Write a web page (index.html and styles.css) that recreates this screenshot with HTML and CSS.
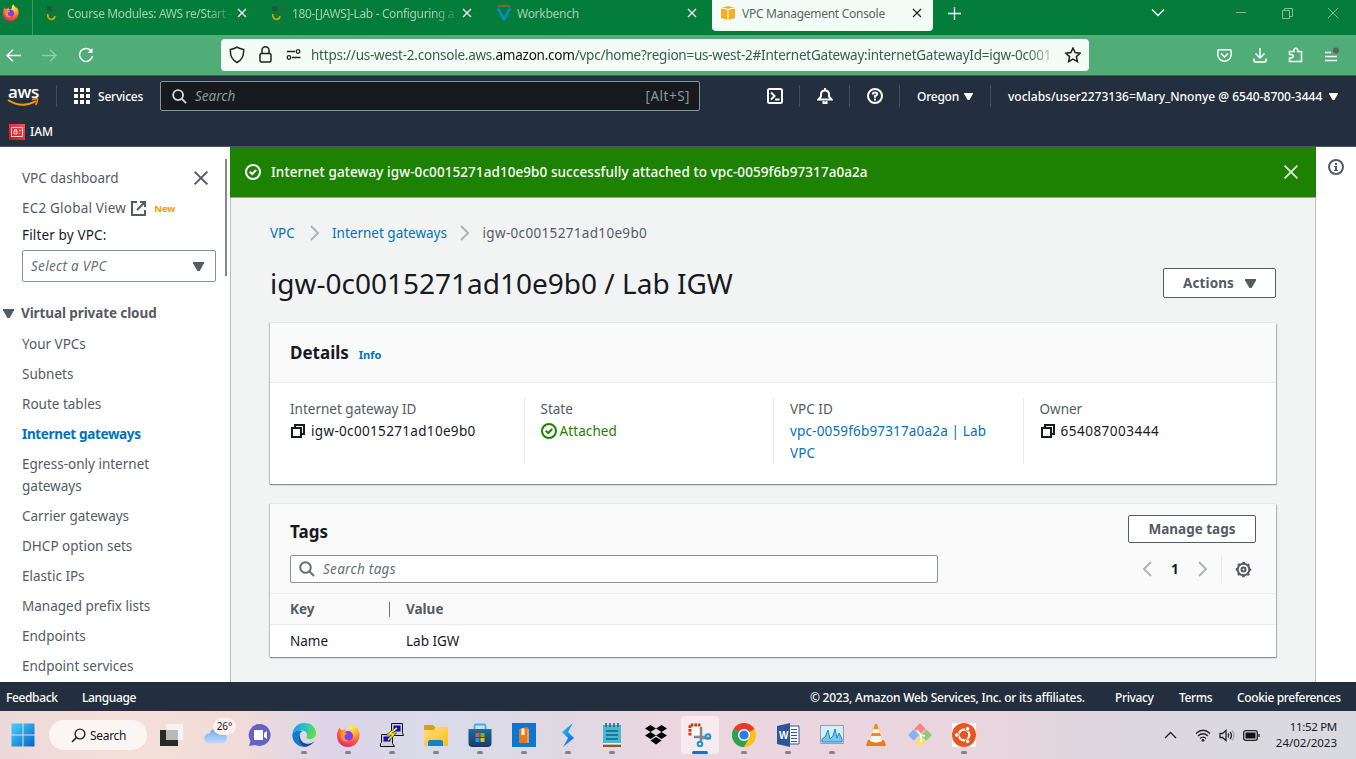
FILE: index.html
```html
<!DOCTYPE html>
<html lang="en">
<head>
<meta charset="utf-8">
<title>VPC Management Console</title>
<link rel="stylesheet" href="styles.css">
</head>
<body>
<svg width="0" height="0" class="defs">
  <defs>
    <linearGradient id="win" x1="0" y1="0" x2="1" y2="1"><stop offset="0" stop-color="#4fd0fb"/><stop offset="1" stop-color="#0067c8"/></linearGradient>
    <radialGradient id="ff" cx=".65" cy=".15" r=".95"><stop offset="0" stop-color="#fff04f"/><stop offset=".35" stop-color="#ffb12c"/><stop offset=".65" stop-color="#ff5a3a"/><stop offset="1" stop-color="#e5128a"/></radialGradient>
    <linearGradient id="edge" x1="0" y1="0" x2="1" y2=".2"><stop offset="0" stop-color="#1a9be0"/><stop offset=".5" stop-color="#27bcd4"/><stop offset="1" stop-color="#5ee04c"/></linearGradient>
    <linearGradient id="cloud" x1="0" y1="0" x2="0" y2="1"><stop offset="0" stop-color="#6ea8ef"/><stop offset="1" stop-color="#c3dafa"/></linearGradient>
    <linearGradient id="fold" x1="0" y1="0" x2="1" y2="1"><stop offset="0" stop-color="#ffe07a"/><stop offset="1" stop-color="#fbbb24"/></linearGradient>
    <linearGradient id="store" x1="0" y1="0" x2="0" y2="1"><stop offset="0" stop-color="#2069a6"/><stop offset="1" stop-color="#163a66"/></linearGradient>
    <linearGradient id="swift" x1="0" y1="0" x2="1" y2="1"><stop offset="0" stop-color="#28c3f5"/><stop offset="1" stop-color="#0a5fd6"/></linearGradient>
    <linearGradient id="iam" x1="1" y1="0" x2="0" y2="1"><stop offset="0" stop-color="#ff5252"/><stop offset="1" stop-color="#c7131f"/></linearGradient>
    <symbol id="firefox" viewBox="0 0 24 24"><path fill="url(#ff)" d="M3.500 4.500L5 7l2.500-.3 2-2-.2 2.500L12 8l2-2.500c-.5-2 .5-4 2.200-5.500.3 2.500 2.300 3.600 3.800 5.500l1-1c2.500 4 3.300 8 1.600 12C20.800 21 16.800 24 12 24 6 24 1 19.500 1 13c0-3.500 1-6 2.500-8.500z"/><circle cx="12" cy="13" r="5" fill="#7a3ff0"/><path fill="#ff9532" d="M5.500 9c2.500-1 4.500.2 6 2-2 .2-3 1-3 3 0 2.500 2.200 3.600 4.500 3-2 2.500-7 1.500-8-2-.5-2-.5-4 .5-6z"/></symbol>
    <symbol id="awslogo" viewBox="0 0 16 16"><path d="M2 1h5v5H2z" fill="#24583a"/><path d="M10 3h6M10 5.500h6" stroke="#24693f" stroke-width="1.500"/><path d="M2.500 8.500q0 5 3.500 5 3 0 3.500-3" fill="none" stroke="#c9a512" stroke-width="1.600"/></symbol>
    <symbol id="x" viewBox="0 0 10 10"><path d="M1 1l8 8M9 1l-8 8" fill="none" stroke="currentColor" stroke-width="1.200"/></symbol>
    <symbol id="mag" viewBox="0 0 16 16"><circle cx="6.500" cy="6.500" r="5.300" fill="none" stroke="currentColor" stroke-width="2"/><path d="M10.300 10.300l4.700 4.700" stroke="currentColor" stroke-width="2"/></symbol>
    <symbol id="copy" viewBox="0 0 14 14"><path d="M1 4h9v9H1z M4 4V1h9v9h-3" fill="none" stroke="currentColor" stroke-width="2"/></symbol>
    <symbol id="ok" viewBox="0 0 16 16"><circle cx="8" cy="8" r="7" fill="none" stroke="currentColor" stroke-width="2"/><path d="M4.700 7.700L7.200 10l4-4" fill="none" stroke="currentColor" stroke-width="2"/></symbol>
    <symbol id="chev" viewBox="0 0 9 16"><path d="M1 1l7 7-7 7" fill="none" stroke="currentColor" stroke-width="2"/></symbol>
    <symbol id="tri" viewBox="0 0 10 8"><path d="M0 0h10v1L6 8H4L0 1z" fill="currentColor"/></symbol>
  </defs>
</svg>

<header class="tabs">
  <div class="pin"><svg width="17" height="17"><use href="#firefox"/></svg></div>
  <div class="tab"><svg width="17" height="17"><use href="#awslogo"/></svg><span class="tab-t t1">Course Modules: AWS re/Start -</span><svg class="close" width="10" height="10"><use href="#x"/></svg></div>
  <div class="tab"><svg width="17" height="17"><use href="#awslogo"/></svg><span class="tab-t t2">180-[JAWS]-Lab - Configuring a</span><svg class="close" width="10" height="10"><use href="#x"/></svg></div>
  <div class="tab"><svg class="wb" width="14" height="16" viewBox="0 0 14 16"><path d="M1 2q6-2.500 12 0" fill="none" stroke="#b55a25" stroke-width="1.500"/><path d="M1 3.500l6 11 6-11" fill="none" stroke="#078dbb" stroke-width="2.800"/></svg><span class="tab-t t3">Workbench</span><svg class="close" width="10" height="10"><use href="#x"/></svg></div>
  <div class="tab active"><svg width="16" height="16" viewBox="0 0 16 16"><path d="M1 3.500l6.500 1.300V15L1 13zM15 3.500L8.500 4.800V15l6.500-2zM2 2.500L8 1l6 1.500-6 1.200z" fill="#f3ae25"/></svg><span class="tab-t t4">VPC Management Console</span><svg class="close" width="10" height="10"><use href="#x"/></svg></div>
  <svg class="plus" width="13" height="13" viewBox="0 0 13 13"><path d="M6.500 0v13M0 6.500h13" stroke="#fff" stroke-width="1.300"/></svg>
  <div class="winctl">
    <svg width="14" height="9" viewBox="0 0 14 9"><path d="M1 1.500l6 6 6-6" fill="none" stroke="#fff" stroke-width="1.300"/></svg>
    <svg class="dim m1" width="10" height="10"><path d="M0 4.500h10"/></svg>
    <svg class="dim m2" width="11" height="11"><path d="M.5 2.500h7v8h-7zM2.500 2.500v-2h8v8h-3"/></svg>
    <svg class="dim m3" width="10" height="10"><path d="M0 0l10 10M10 0L0 10"/></svg>
  </div>
</header>

<div class="toolbar">
  <svg class="nav" width="15" height="13" viewBox="0 0 15 13"><path d="M15 6.500H1M7 .7l-6 5.800 6 5.800"/></svg>
  <svg class="nav faded" width="15" height="13" viewBox="0 0 15 13"><path d="M0 6.500h14M8 .7l6 5.800-6 5.800"/></svg>
  <svg class="nav" width="16" height="16" viewBox="0 0 16 16"><path d="M13.600 4.500A6.500 6.500 0 1 0 14.500 9"/><path d="M14.500 1v5h-5z" fill="#fff" stroke="none"/></svg>
  <div class="url">
    <svg width="16" height="18" viewBox="0 0 16 18"><path d="M8 1.200c2 1.500 4.300 2 6.600 2.300C15 9 13 14 8 16.500 3 14 1 9 1.400 3.500 3.700 3.200 6 2.700 8 1.200z"/></svg>
    <svg class="lock" width="13" height="17" viewBox="0 0 13 17"><rect x="1" y="7.500" width="11" height="8.500" rx="1.500"/><path d="M3 7.500V4.300a3.500 3.500 0 0 1 7 0v3.200"/></svg>
    <svg class="perm" width="15" height="11" viewBox="0 0 15 11"><path d="M1 2.500h8M6 8.500h8.500"/><circle cx="12" cy="2.500" r="1.800"/><circle cx="3" cy="8.500" r="1.800"/></svg>
    <span class="addr">https://us-west-2.console.aws.<b>amazon.com</b>/vpc/home?region=us-west-2#InternetGateway:internetGatewayId=igw-0c001</span>
    <svg class="star" width="16" height="16" viewBox="0 0 16 16"><path d="M8 1l2.100 4.600 5 .6-3.700 3.400 1 5L8 12.100 3.600 14.600l1-5L.9 6.200l5-.6z"/></svg>
  </div>
  <div class="ext">
    <svg width="15" height="13" viewBox="0 0 15 13"><path d="M2 .8h11q1.200 0 1.200 1.200v3.500a6.700 6.700 0 0 1-13.400 0V2Q.8.800 2 .8zM4 4.500L7.500 8 11 4.500"/></svg>
    <svg width="14" height="16" viewBox="0 0 14 16"><path d="M7 1v10M2.500 6.500L7 11l4.500-4.500M1 11.500v2q0 1.500 1.500 1.500h9q1.500 0 1.500-1.500v-2"/></svg>
    <svg width="15" height="16" viewBox="0 0 15 16"><path d="M1.500 14.500v-3.500h2a1.700 1.700 0 0 0 0-3.400h-2V4.500H6V3a1.800 1.800 0 0 1 3.600 0v1.500H13.500v10z"/></svg>
    <svg width="15" height="17" viewBox="0 0 15 17"><path d="M1 5.500h6M1 9.500h12M1 13.500h12"/><circle cx="12" cy="3.500" r="3" fill="#5d6062" stroke="none"/></svg>
  </div>
</div>

<div class="aws">
  <div class="aws-main">
    <div class="logo"><span>aws</span><svg width="32" height="9" viewBox="0 0 32 9"><path d="M1 2q14 9 28 1" fill="none" stroke="#f90" stroke-width="2"/><path d="M25 1.500q6-1.500 5.500 0 0 3-2 5.500" fill="none" stroke="#f90" stroke-width="1.400"/></svg></div>
    <i class="sep s1"></i>
    <svg class="grid" width="16" height="16" fill="#fff"><path d="M0 0h4v4H0zM6 0h4v4H6zM12 0h4v4h-4zM0 6h4v4H0zM6 6h4v4H6zM12 6h4v4h-4zM0 12h4v4H0zM6 12h4v4H6zM12 12h4v4h-4z"/></svg>
    <span class="services">Services</span>
    <div class="find"><svg width="15" height="15"><use href="#mag"/></svg><em>Search</em><span>[Alt+S]</span></div>
    <div class="tools">
      <svg width="16" height="16" viewBox="0 0 16 16"><rect x="1" y="1" width="14" height="14" rx="1.500"/><path d="M4 4.500L7.500 8 4 11.500M8 11.500h4.500"/></svg>
      <i class="sep"></i>
      <svg width="16" height="16" viewBox="0 0 16 16"><path d="M1.500 11.500L4 8.500V6.500q0-4 4-4t4 4v2l2.500 3zM8 0v2.500M6.500 13v2h3v-2"/></svg>
      <i class="sep"></i>
      <svg width="16" height="16" viewBox="0 0 16 16"><circle cx="8" cy="8" r="7"/><path d="M5.800 6.500Q5.800 4.500 8 4.500t2.200 1.800Q10.200 7.500 8 8v1.800M8 10.800v1.700"/></svg>
      <i class="sep"></i>
      <span class="region">Oregon</span><svg class="ar" width="9" height="7"><use href="#tri"/></svg>
      <i class="sep s2"></i>
      <span class="user">voclabs/user2273136=Mary_Nnonye @ 6540-8700-3444</span><svg class="ar" width="9" height="7"><use href="#tri"/></svg>
    </div>
  </div>
  <div class="fav"><svg width="16" height="16" viewBox="0 0 16 16"><path fill="url(#iam)" d="M0 0h16v16H0z"/><path d="M2.500 3.500h11v9h-11zM5 7h3v3H5zM5.500 7V5.500h2V7M10 6.500h2M10 9.500h1" fill="none" stroke="#fff" stroke-width=".8"/></svg><span>IAM</span></div>
</div>

<div class="body">
  <nav class="side">
    <div class="side-top"><span class="sd1">VPC dashboard</span><svg width="16" height="16"><use href="#x"/></svg></div>
    <div class="ec2"><span class="sd2">EC2 Global View</span><svg width="15" height="15" viewBox="0 0 15 15"><path d="M6 1H1v13h13V9M9 1h5v5M14 1L6 9" fill="none" stroke="#545b64" stroke-width="2"/></svg><b>New</b></div>
    <div class="filter">Filter by VPC:</div>
    <div class="select"><em>Select a VPC</em><svg width="11" height="9"><use href="#tri"/></svg></div>
    <div class="group"><svg width="11" height="9"><use href="#tri"/></svg><b>Virtual private cloud</b></div>
    <ul>
      <li>Your VPCs</li><li>Subnets</li><li>Route tables</li><li class="cur">Internet gateways</li><li>Egress-only internet<br>gateways</li><li>Carrier gateways</li><li>DHCP option sets</li><li>Elastic IPs</li><li>Managed prefix lists</li><li>Endpoints</li><li>Endpoint services</li>
    </ul>
    <i class="scroll"></i>
  </nav>
  <main>
    <div class="flash"><svg width="16" height="16"><use href="#ok"/></svg><span>Internet gateway igw-0c0015271ad10e9b0 successfully attached to vpc-0059f6b97317a0a2a</span><svg class="fx" width="16" height="16"><use href="#x"/></svg></div>
    <div class="page">
      <div class="crumbs"><a>VPC</a><svg width="9" height="16"><use href="#chev"/></svg><a class="c2">Internet gateways</a><svg width="9" height="16"><use href="#chev"/></svg><span class="c3">igw-0c0015271ad10e9b0</span></div>
      <div class="title"><h1>igw-0c0015271ad10e9b0 / Lab IGW</h1><button class="btn actions"><span>Actions</span><svg width="11" height="9"><use href="#tri"/></svg></button></div>
      <section class="card details">
        <div class="card-h"><h2>Details</h2><b class="info">Info</b></div>
        <div class="cols">
          <div><label>Internet gateway ID</label><p><svg width="14" height="14"><use href="#copy"/></svg><span class="v1">igw-0c0015271ad10e9b0</span></p></div>
          <div><label>State</label><p class="green"><svg width="16" height="16"><use href="#ok"/></svg><span class="v2">Attached</span></p></div>
          <div><label>VPC ID</label><p class="link v3">vpc-0059f6b97317a0a2a | Lab<br>VPC</p></div>
          <div><label>Owner</label><p><svg width="14" height="14"><use href="#copy"/></svg><span class="v4">654087003444</span></p></div>
        </div>
      </section>
      <section class="card tags">
        <div class="tag-top">
          <div class="tag-title"><h2>Tags</h2><button class="btn manage">Manage tags</button></div>
          <div class="tag-search">
            <div class="input"><svg width="16" height="16"><use href="#mag"/></svg><em>Search tags</em></div>
            <div class="pager"><svg class="flip" width="9" height="16"><use href="#chev"/></svg><span>1</span><svg width="9" height="16"><use href="#chev"/></svg><i></i>
            <svg class="gear" width="17" height="17" viewBox="0 0 17 17"><circle cx="8.500" cy="8.500" r="5.800"/><circle cx="8.500" cy="8.500" r="2"/><circle cx="8.500" cy="8.500" r="7" stroke-dasharray="2.600 2.898" stroke-dashoffset="1.300" stroke-width="1.600"/></svg></div>
          </div>
        </div>
        <div class="row head"><b>Key</b><i></i><b>Value</b></div>
        <div class="row"><span class="n">Name</span><span>Lab IGW</span></div>
      </section>
    </div>
  </main>
  <aside><svg width="16" height="16" viewBox="0 0 16 16"><circle cx="8" cy="8" r="7" fill="none" stroke="#545b64" stroke-width="2"/><path d="M7 4h2v2H7zM6 7h3v4h1v1H6v-1h1V8H6z" fill="#545b64"/></svg></aside>
</div>

<footer><span class="f1">Feedback</span><span class="f2">Language</span><span class="f3">© 2023, Amazon Web Services, Inc. or its affiliates.</span><span class="f4">Privacy</span><span class="f5">Terms</span><span class="f6">Cookie preferences</span></footer>

<div class="taskbar">
  <div class="app"><svg width="24" height="24" viewBox="0 0 24 24"><path fill="url(#win)" d="M.5.500h11v11H.5zM12.500.500h11v11h-11zM.5 12.500h11v11H.5zM12.500 12.500h11v11h-11z"/></svg></div>
  <div class="pill"><svg width="15" height="15" viewBox="0 0 15 15"><circle cx="9" cy="6" r="4.900" fill="none" stroke="#222" stroke-width="1.400"/><path d="M5.500 9.500L1 14" stroke="#222" stroke-width="1.600"/></svg><span>Search</span></div>
  <div class="app"><svg width="24" height="24" viewBox="0 0 24 24"><path d="M6 1h17v16H6z" fill="#f4f4f4"/><path d="M0 7h18v16H0z" fill="#292929"/><path d="M6 7h12v10H6z" fill="#b9b9b9"/></svg></div>
  <div class="app weather"><svg width="26" height="26" viewBox="0 0 26 26"><path fill="url(#cloud)" d="M6 21.500a5 5 0 0 1 .5-10A7 7 0 0 1 19 10a6 6 0 0 1 1 11.500z"/></svg><span>26°</span></div>
  <div class="app"><svg width="24" height="24" viewBox="0 0 24 24"><path fill="#6661c8" d="M12 1a11 11 0 1 1-5 21l-6 1 1.500-5A11 11 0 0 1 12 1z"/><path fill="#fff" d="M6 7h9v10H6zM16 10l3-2v8l-3-2z"/></svg></div>
  <div class="app run"><svg width="24" height="24" viewBox="0 0 24 24"><path fill="url(#edge)" d="M.5 11C1 4.500 6 0 12.500 0 20 0 24 5 24 10c0 4-3 6-6.500 6-2 0-3.500-.8-3-2 1.500-2.500 0-6-4-6.500C6 7 2 8 .5 11z"/><path fill="#117bd3" d="M.4 11C2 7.500 7 6.500 10.500 8.500 7.500 9.500 6.500 13 8 16.500c1.500 4 5 6 8 6.500-8 3-16.500-3-15.600-12z"/><path fill="#0f4f9b" d="M10 9c-4 3-2 10 3.500 11.500 4 1 7-.5 9-2.500-2 3.500-5.500 5.500-10 5.800C7 22 4.500 13 10 9z"/></svg></div>
  <div class="app run"><svg width="24" height="24"><use href="#firefox"/></svg></div>
  <div class="app run"><svg width="24" height="24" viewBox="0 0 24 24"><g fill="#cfcfcf" stroke="#111"><path d="M11.500.500h11v9l1 3h-12zM1.500 11.500h11v9l2 3H.5v-3l1-1z"/></g><path d="M13.500 2.500h7v6h-7zM3.500 13.500h7v5h-7z" fill="#0808d8"/><path d="M17 5l-8 6h5l-6 6" fill="none" stroke="#222" stroke-width="2.600"/><path d="M17 5l-8 6h5l-6 6" fill="none" stroke="#f7ee18" stroke-width="1.600"/></svg></div>
  <div class="app run"><svg width="26" height="24" viewBox="0 0 26 24"><path d="M1 3q0-1 1-1h8l3 3v5H1z" fill="#dca00e"/><path d="M1 7h10l2-3h12v19H1z" fill="url(#fold)"/><path d="M5 23v-4q0-2 2-2h11q2 0 2 2v4z" fill="#1580ce"/></svg></div>
  <div class="app run"><svg width="24" height="24" viewBox="0 0 24 24"><path d="M6.500 6V3q0-1.500 1.500-1.500h8q1.500 0 1.500 1.500v3" fill="none" stroke="#29b5ef" stroke-width="1.800"/><path d="M.5 6h23v14q0 4-4 4h-15q-4 0-4-4z" fill="url(#store)"/><path d="M7.500 10h4v4h-4z" fill="#f25022"/><path d="M12.500 10h4v4h-4z" fill="#7fba00"/><path d="M7.500 15h4v4h-4z" fill="#00a4ef"/><path d="M12.500 15h4v4h-4z" fill="#ffb900"/></svg></div>
  <div class="app run"><svg width="24" height="24" viewBox="0 0 24 24"><path fill="#0878d4" d="M0 0h24v24H0z"/><path d="M7 6l8-2 2 2v14H7z" fill="#e8781a"/><path d="M9.500 5.500h3v7l-1.500-1-1.500 1z" fill="#fff"/><path d="M15 6h2v14h-2z" fill="#f79a4a"/></svg></div>
  <div class="app run"><svg width="24" height="24" viewBox="0 0 24 24"><path fill="url(#swift)" d="M17 0L6 9l6 6-5 9 11-9-6-6z"/></svg></div>
  <div class="app run"><svg width="20" height="24" viewBox="0 0 20 24"><path d="M1 2h18v20H1z" fill="#49b8d3"/><path d="M1 21.500h18V24H1z" fill="#a84e12"/><path d="M1 20h18v1.500H1z" fill="#fff"/><path d="M4 0v4M8 0v4M12 0v4M16 0v4M4 8h12M4 12h12M4 16h12" stroke="#14627d" stroke-width="1.500"/></svg></div>
  <div class="app"><svg width="24" height="22" viewBox="0 0 24 22"><path d="M6.500 1L12 4.500 6.500 8 1 4.500zM17.500 1L23 4.500 17.500 8 12 4.500zM6.500 8L12 11.500 6.500 15 1 11.500zM17.500 8L23 11.500 17.500 15 12 11.500zM12 13l5.500 3.500L12 20.500 6.500 16.500z"/></svg></div>
  <div class="app run on"><svg width="24" height="24" viewBox="0 0 24 24"><path d="M3 3h9v9H3z" fill="#fff"/><path d="M2 12.500V2h10.500" fill="none" stroke="#d4380d" stroke-width="3" stroke-dasharray="2.800 .9"/><path d="M13 4v11h10M6 14h12M13 12v6" fill="none" stroke="#7d8892" stroke-width="2.500"/><g fill="none" stroke="#1693dc" stroke-width="2"><circle cx="20" cy="13.500" r="2.300"/><circle cx="12" cy="21" r="2.300"/></g></svg></div>
  <div class="app run"><svg width="24" height="24" viewBox="0 0 24 24"><circle cx="12" cy="12" r="12" fill="#fbc116"/><path d="M12 12L1.600 6a12 12 0 0 1 20.800 0z" fill="#e33b2e"/><path d="M12 12L1.600 6A12 12 0 0 0 12 24l5-9z" fill="#2ba24c"/><circle cx="12" cy="12" r="6" fill="#fff"/><circle cx="12" cy="12" r="4.600" fill="#2e7bea"/></svg></div>
  <div class="app run"><svg width="24" height="24" viewBox="0 0 24 24"><path d="M12 3h11v18H12z" fill="#fff" stroke="#2b579a"/><path d="M15 6.500h6M15 9.500h6M15 12.500h6M15 15.500h6M15 18.500h6" stroke="#2b579a"/><path d="M1 3l13-3v24L1 21z" fill="#2b579a"/><text x="3" y="16" class="wd">W</text></svg></div>
  <div class="app run"><svg width="24" height="20" viewBox="0 0 24 20"><path d="M.5.500h23v18H.5z" fill="#d5edf8" stroke="#8fa2ad"/><path d="M2 14l3-2 3-7 2 9 3-3 2-7 2 9 2-5 3 6v3H2z" fill="#77c4ec" stroke="#2389c7"/></svg></div>
  <div class="app"><svg width="24" height="24" viewBox="0 0 24 24"><path d="M11 1h2l6 18H5z" fill="#f58a16"/><path d="M9.300 6h5.400l1.300 4H8zM7 13h10l1 4H6z" fill="#f5f5f5"/><path d="M4 17h16l2 6H2z" fill="#f37a0c"/><path d="M6 18q6 3 12 0v-1H6z" fill="#fff"/></svg></div>
  <div class="app"><svg width="24" height="24" viewBox="0 0 24 24"><g transform="rotate(45 12 12)"><path fill="#f88482" d="M3.500 3.500h8v8h-8z"/><path fill="#91cb76" d="M12.500 3.500h8v8h-8z"/><path fill="#86b2f7" d="M3.500 12.500h8v8h-8z"/><path fill="#fddf71" d="M12.500 12.500h8v8h-8z"/></g><path d="M9 7l4 5v7M13 12l4 1" stroke="#fff" stroke-width="1.500" fill="none"/></svg></div>
  <div class="app run"><svg width="24" height="24" viewBox="0 0 24 24"><path fill="#fff" d="M0 0h24v24H0z"/><circle cx="12" cy="12" r="12" fill="#e95420"/><circle cx="12" cy="12" r="5.300" fill="none" stroke="#fff" stroke-width="2.200"/><g fill="#fff" stroke="#e95420"><circle cx="4.800" cy="12" r="2.300"/><circle cx="15.600" cy="5.800" r="2.300"/><circle cx="15.600" cy="18.200" r="2.300"/></g></svg></div>
  <div class="tray">
    <svg class="up" width="13" height="8"><path d="M1 7l5.500-5.500L12 7"/></svg>
    <svg class="wifi" width="16" height="13" viewBox="0 0 16 13"><path d="M1 4.500q7-6.500 14 0M3 7q5-4.500 10 0M5 9.500q3-2.800 6 0"/><circle cx="8" cy="11.300" r="1.400" fill="#222" stroke="none"/></svg>
    <svg class="vol" width="16" height="13" viewBox="0 0 16 13"><path d="M1 4.500h2.500L7 1.500v10l-3.500-3H1zM9 4.500q1.500 2 0 4M11 3q3 3.500 0 7"/><path d="M13 1.500q4 5 0 10" stroke="#aaa"/></svg>
    <svg class="bat" width="17" height="11" viewBox="0 0 17 11"><rect x=".7" y=".7" width="13.600" height="9.600" rx="2"/><path d="M2.500 2.500h10v6h-10z" fill="#111" stroke="none"/><path d="M16 4v3"/></svg>
    <div class="clock"><span class="k1">11:52 PM</span><span class="k2">24/02/2023</span></div>
  </div>
</div>
</body>
</html>
```
FILE: styles.css
```css
* { box-sizing: border-box; }
body { margin: 0; width: 1356px; height: 759px; overflow: hidden; font: 13.500px/22px "Noto Sans", sans-serif; color: #16191f; background: #fff; }
svg { display: block; flex: none; }
.defs { position: absolute; }
span, em, a, b, h1, h2 { white-space: nowrap; }

/* browser tabs */
.tabs { height: 35px; background: #047c3a; display: flex; color: #fff; font-size: 12px; line-height: 16px; }
.pin { width: 33px; padding: 4px 0 0 2px; border-right: 1px solid #3d9b66; }
.tab { width: 225px; height: 31px; display: flex; align-items: flex-start; padding: 5px 0 0 12px; }
.tab .tab-t { margin: 1px 0 0 5px; width: 165px; color: #a3cfb4; letter-spacing: -.28px; }
.tab .t1, .tab .t2 { -webkit-mask-image: linear-gradient(90deg, #000 140px, transparent 168px); mask-image: linear-gradient(90deg, #000 140px, transparent 168px); letter-spacing: -.36px; }
.tab .close { margin: 3px 0 0 5px; }
.tab .wb { margin: 0 1px 0 2px; }
.tab .t3 { margin-left: 5px; }
.tab.active { background: #f3fcf7; color: #222; width: 221px; margin-left: 4px; padding-left: 8px; border-radius: 0 0 4px 4px; }
.tab.active .tab-t { color: #56675d; margin-left: 6px; }
.plus { margin: 7px 0 0 15px; }
.winctl { display: flex; margin: 8px 0 0 190px; align-items: flex-start; }
.dim { fill: none; stroke: #83bd9b; stroke-width: 1; }
.m1 { margin-left: 71px; } .m2 { margin-left: 36px; } .m3 { margin-left: 35px; }

/* address bar */
.toolbar { height: 41px; background: #50ad78; border-bottom: 1px solid #0d7c40; display: flex; align-items: center; padding-left: 6px; }
.nav { fill: none; stroke: #fff; stroke-width: 1.500; margin-right: 21px; }
.nav.faded { stroke: #8fcca9; }
.url { margin: 0 0 1px 106px; width: 868px; height: 32px; border-radius: 4px; background: #f3fcf7; display: flex; align-items: center; padding-left: 8px; }
.url svg { fill: none; stroke: #222; stroke-width: 1.500; }
.url .lock { margin-left: 14px; } .url .perm { margin: 0 10px 0 14px; stroke-width: 1.300; }
.addr { width: 749px; padding-top: 1px; letter-spacing: -.235px; color: #3b5f4a; -webkit-mask-image: linear-gradient(90deg, #000 715px, transparent 752px); mask-image: linear-gradient(90deg, #000 715px, transparent 752px); }
.addr b { font-weight: 400; color: #111; }
.star { margin-left: 5px; }
.ext { display: flex; align-items: center; margin-left: 128px; gap: 21px; }
.ext svg { fill: none; stroke: #fff; stroke-width: 1.500; }

/* console header */
.aws { height: 71px; background: #232f3e; color: #fff; border-bottom: 1px solid #4d5560; }
.aws-main { height: 40px; display: flex; align-items: center; font-size: 12px; font-weight: 500; }
.logo { width: 56px; padding-left: 7px; }
.logo span { display: block; font: 600 17px/13px "Open Sans", sans-serif; letter-spacing: -.3px; padding-left: 1px; }
.sep { width: 1px; height: 22px; background: #414d5c; }
.grid { margin: 0 8px 0 17px; }
.services { width: 62px; letter-spacing: -.2px; padding-top: 2px; }
.find { width: 540px; height: 30px; border: 1px solid #879596; background: #16191f; border-radius: 2px; display: flex; align-items: center; padding: 0 9px 0 11px; font-size: 13.500px; font-weight: 400; color: #d5dbdb; }
.find em { margin-left: 8px; flex: 1; color: #8d999a; }
.find span { color: #8d999a; letter-spacing: .5px; }
.tools { display: flex; align-items: center; margin-left: 67px; }
.tools svg { fill: none; stroke: #fff; stroke-width: 2; margin-right: 16px; }
.tools .sep + svg { margin-left: 17px; }
.tools .ar { stroke: none; margin: 0; }
.tools span { padding-top: 2px; }
.region { margin-left: 17px; width: 47px; letter-spacing: -.25px; }
.tools .s2 { margin-left: 17px; }
.user { margin-left: 17px; width: 321px; }
.fav { display: flex; align-items: center; gap: 5px; padding-left: 9px; height: 31px; font-size: 12px; font-weight: 500; }

/* columns */
.body { display: flex; height: 535px; }
.side { width: 230px; position: relative; color: #545b64; padding: 20px 0 0 22px; overflow: hidden; }
.side-top { display: flex; align-items: center; height: 22px; }
.side-top svg { margin-left: auto; margin-right: 21px; }
.ec2 { display: flex; align-items: center; margin-top: 8px; height: 22px; }
.sd2 { letter-spacing: .2px; }
.ec2 svg { margin: 0 8px 0 5px; }
.ec2 b { font-size: 9.500px; color: #ff9900; padding-top: 2px; }
.filter { color: #16191f; margin-top: 5px; letter-spacing: .15px; }
.select { margin-top: 4px; width: 194px; height: 32px; border: 1px solid #879596; border-radius: 2px; display: flex; align-items: center; justify-content: space-between; padding: 0 11px 0 8px; }
.select em { color: #687078; letter-spacing: .3px; }
.group { margin: 20px 0 0 -19px; display: flex; align-items: center; gap: 7px; letter-spacing: -.1px; }
.side ul { list-style: none; margin: 9px 0 0; padding: 0; }
.side li { margin-bottom: 8px; }
.side .cur { font-weight: 700; color: #0073bb; letter-spacing: -.35px; }
.scroll { position: absolute; right: 3px; top: 12px; width: 2px; height: 117px; background: #85898e; }
main { width: 1086px; background: #f2f3f3; box-shadow: inset 1px 0 #b9c0c4, inset -1px 0 #b9c0c4; }
.flash { height: 51px; background: #1d8102; color: #fff; border-bottom: 1px solid #9ba79b; display: flex; align-items: center; padding: 0 17px 0 15px; font-weight: 500; }
.flash span { margin-left: 10px; letter-spacing: .075px; }
.fx { margin-left: auto; color: #d8e9d4; }
.page { padding: 24px 40px 0; }
.crumbs { display: flex; align-items: center; height: 22px; color: #545b64; }
.crumbs a, .link, .info { color: #0073bb; }
.crumbs a:first-child { width: 26px; }
.crumbs .c2 { width: 114.500px; }
.crumbs svg { color: #aab7b8; margin: 0 13.500px; }
.crumbs .c3, .v1 { letter-spacing: .33px; }
.title { display: flex; justify-content: space-between; align-items: center; height: 36px; margin: 21px 0 22px; }
h1 { font-size: 28px; line-height: 36px; font-weight: 400; margin: 0; }
h2 { font-size: 17px; line-height: 22px; margin: 0; font-weight: 700; }
.btn { border: 1px solid #545b64; border-radius: 2px; background: #fff; color: #545b64; font: 700 13.500px/22px "Noto Sans", sans-serif; padding: 0; display: flex; justify-content: center; align-items: center; }
.actions { width: 113px; height: 30px; gap: 11px; letter-spacing: .1px; }
.card { background: #fff; box-shadow: 0 1px 1px #8b989b, 1px 1px 1px #b6bebf, -1px 0 1px #c8cecf, 0 -1px 0 #eaeded; }
.details { height: 161px; }
.card-h { height: 60px; background: #fafafa; border-bottom: 1px solid #eaeded; display: flex; align-items: center; padding-left: 20px; }
.info { font-size: 11px; margin: 4px 0 0 10px; }
.cols { display: grid; grid-template-columns: 253.500px 249.500px 249.500px 1fr; padding-top: 15px; }
.cols > div { height: 66px; padding-left: 16px; border-left: 1px solid #eaeded; }
.cols > div:first-child { padding-left: 20px; border: 0; }
.cols label { color: #545b64; display: block; }
.cols p { margin: 0; display: flex; }
.cols p svg { margin: 4px 6px 0 1px; }
.cols p.green { color: #1d8102; }
.cols p.green svg { margin: 3px 3px 0 0; }
.cols p.link { display: block; letter-spacing: .17px; }
.v2 { letter-spacing: .1px; }
.v4 { letter-spacing: .5px; }
.tags { margin-top: 20px; height: 153px; }
.tag-top { background: #fafafa; height: 90px; padding: 11px 20px 0; border-bottom: 1px solid #eaeded; }
.tag-title { display: flex; justify-content: space-between; height: 28px; }
.tag-title h2 { padding-top: 6px; }
.manage { width: 128px; height: 28px; }
.tag-search { display: flex; margin-top: 12px; }
.input { width: 648px; height: 28px; border: 1px solid #879596; border-radius: 2px; background: #fff; display: flex; align-items: center; padding-left: 8px; gap: 8px; color: #687078; letter-spacing: .3px; }
.pager { display: flex; align-items: center; color: #aab7b8; margin-left: 205px; }
.pager span { color: #16191f; font-weight: 700; width: 8px; margin: 0 19px; }
.pager i { width: 1px; height: 28px; background: #eaeded; margin: 0 13px 0 14px; }
.flip { transform: scaleX(-1); }
.gear { fill: none; stroke: #545b64; stroke-width: 2; }
.row { display: flex; align-items: center; padding-left: 20px; height: 32px; }
.head { background: #fafafa; border-bottom: 1px solid #eaeded; color: #545b64; height: 31px; }
.head b:first-child { width: 99px; }
.head i { width: 1px; height: 15px; background: #687078; margin-right: 16px; }
.row .n { width: 116px; }
aside { width: 40px; padding: 12px 0 0 12px; }

/* footer */
footer { height: 29px; background: #232f3e; color: #fff; display: flex; align-items: center; font-size: 12px; font-weight: 500; padding: 2px 0 0 6px; letter-spacing: -.37px; }
.f1 { width: 76px; } .f2 { width: 728px; } .f3 { width: 305px; letter-spacing: -.24px; } .f4 { width: 64px; } .f5 { width: 58px; }

/* taskbar */
.taskbar { height: 48px; display: flex; align-items: center; padding-left: 1px; background: linear-gradient(90deg, #ecd9d9 0, #f5dfd8 130px, #f1dbd8 240px, #dcd5e8 330px, #d9dbe8 450px, #dfd8e3 570px, #ecd6df 680px, #e8d5de 1000px, #dcd7df 1120px, #d9dae0 1356px); }
.app { width: 44px; height: 48px; display: flex; align-items: center; justify-content: center; position: relative; }
.app.run::after { content: ""; position: absolute; bottom: 5px; left: 19px; width: 6px; height: 3px; border-radius: 2px; background: #858087; }
.app.on::before { content: ""; position: absolute; inset: 5px 3px; background: #f6ebef; border-radius: 4px; }
.app.on svg { position: relative; }
.app.on.run::after { width: 16px; left: 14px; background: #0078d4; }
.wd { font: 700 10px "Liberation Sans", sans-serif; fill: #fff; }
.pill { width: 98px; height: 30px; border-radius: 15px; background: #fbf5f4; margin: 0 3px 0 4px; display: flex; align-items: center; padding-left: 22px; gap: 4px; font-size: 12px; letter-spacing: -.3px; }
.pill span { padding-top: 1px; }
.weather span { position: absolute; left: 19px; top: 7px; height: 17px; width: 23px; border-radius: 9px; background: #faf1ef; font-size: 10px; line-height: 17px; text-align: center; }
.tray { flex: 1; display: flex; align-items: center; padding-left: 178px; }
.tray svg { fill: none; stroke: #222; stroke-width: 1.300; }
.wifi { margin-left: 18px; } .vol { margin-left: 8px; } .bat { margin-left: 8px; }
.clock { margin-left: auto; padding-right: 19px; text-align: right; font-size: 11.500px; line-height: 16px; display: flex; flex-direction: column; }
.k1 { letter-spacing: -.3px; }
```
